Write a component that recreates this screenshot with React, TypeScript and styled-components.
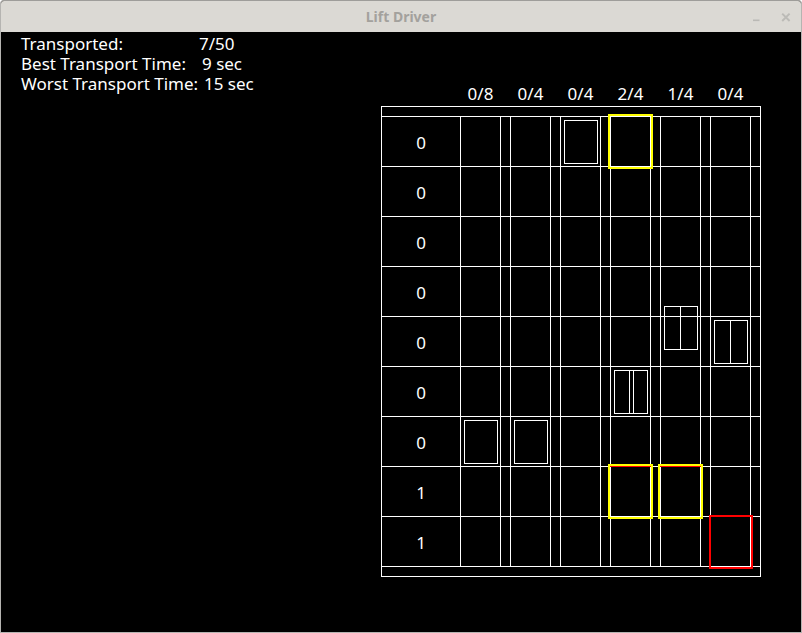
import React from 'react';
import styled, { createGlobalStyle } from 'styled-components';

const GlobalStyle = createGlobalStyle`
  html, body {
    margin: 0;
    padding: 0;
    background: #ffffff;
  }

  body {
    font-family: "Noto Sans", "DejaVu Sans", sans-serif;
  }
`;

const FLOOR_HEIGHT = 50;

type Doors = 'open' | 'ajar' | 'closed';
type Tone = 'call' | 'target';

interface Mark {
  row: number;
  tone: Tone;
  // a call that is also a target shows a thin red line inside the yellow frame
  alsoTarget?: boolean;
}

interface ShaftData {
  load: string;
  car: { at: number; doors: Doors };
  marks: Mark[];
}

const floorCounts = ['0', '0', '0', '0', '0', '0', '0', '1', '1'];

const shafts: ShaftData[] = [
  { load: '0/8', car: { at: 6, doors: 'open' }, marks: [] },
  { load: '0/4', car: { at: 6, doors: 'open' }, marks: [] },
  { load: '0/4', car: { at: 0, doors: 'open' }, marks: [] },
  {
    load: '2/4',
    car: { at: 5, doors: 'ajar' },
    marks: [
      { row: 0, tone: 'call' },
      { row: 7, tone: 'call', alsoTarget: true },
    ],
  },
  {
    load: '1/4',
    car: { at: 3.72, doors: 'closed' },
    marks: [{ row: 7, tone: 'call', alsoTarget: true }],
  },
  { load: '0/4', car: { at: 4, doors: 'closed' }, marks: [{ row: 8, tone: 'target' }] },
];

const stats = [
  { label: 'Transported:', value: '7/50', indent: 0 },
  { label: 'Best Transport Time:', value: '9 sec', indent: 3 },
  { label: 'Worst Transport Time:', value: '15 sec', indent: 5 },
];

const Window = styled.div`
  width: 802px;
  height: 633px;
  box-sizing: border-box;
  display: flex;
  flex-direction: column;
  border: 1px solid #b5b4b1;
  border-top-color: #9e9d9a;
  border-radius: 4px 4px 0 0;
  overflow: hidden;
  background: #000000;
`;

const TitleBar = styled.header`
  flex: none;
  height: 31px;
  display: grid;
  grid-template-columns: 1fr auto 1fr;
  align-items: center;
  background: #dbd9d4;
`;

const Title = styled.h1`
  grid-column: 2;
  margin: 0;
  font-size: 14px;
  font-weight: 700;
  line-height: 1;
  color: #a3a19d;
`;

const WindowButtons = styled.div`
  grid-column: 3;
  justify-self: end;
  display: flex;
  gap: 6px;
  height: 100%;
  padding-right: 3px;
`;

const WindowButton = styled.button`
  width: 24px;
  height: 31px;
  padding: 0;
  border: 0;
  background: none;

  svg {
    display: block;
  }
`;

const Canvas = styled.main`
  flex: 1;
  display: flex;
  justify-content: space-between;
  align-items: flex-start;
  padding: 2px 40px 0 20px;
  background: #000000;
  color: #ffffff;
  font-family: "Noto Sans", "DejaVu Sans", sans-serif;
  font-size: 17px;
  line-height: 20px;
`;

const Stats = styled.dl`
  margin: 0;
  display: grid;
  grid-template-columns: 178px auto;
`;

const StatLabel = styled.dt`
  margin: 0;
  white-space: nowrap;
`;

const StatValue = styled.dd<{ $indent: number }>`
  margin: 0;
  padding-left: ${p => p.$indent}px;
  white-space: nowrap;
`;

const Panel = styled.section`
  width: 380px;
  margin-top: 50px;
`;

const LoadRow = styled.div`
  display: flex;
  height: 20px;
  margin-bottom: 2px;
  padding-left: 79px;
`;

const LoadCell = styled.div`
  width: 50px;
`;

const LoadText = styled.span`
  display: block;
  width: 41px;
  text-align: center;
`;

const Building = styled.div`
  box-sizing: border-box;
  width: 380px;
  padding: 9px 0;
  border: 1px solid #ffffff;
`;

const FloorGrid = styled.div`
  display: flex;
  border-bottom: 1px solid #ffffff;
`;

const LabelColumn = styled.div`
  width: 78px;
`;

const FloorLabel = styled.div`
  box-sizing: border-box;
  height: ${FLOOR_HEIGHT}px;
  padding-top: 2px;
  display: flex;
  align-items: center;
  justify-content: center;
  border-top: 1px solid #ffffff;
`;

const Shaft = styled.div`
  position: relative;
  box-sizing: border-box;
  width: 50px;
  border-left: 1px solid #ffffff;
`;

const ShaftCell = styled.div`
  box-sizing: border-box;
  height: ${FLOOR_HEIGHT}px;
  border-top: 1px solid #ffffff;
`;

const Well = styled.div`
  box-sizing: border-box;
  width: 40px;
  height: 100%;
  border-right: 1px solid #ffffff;
`;

const Highlight = styled.div<{ $tone: Tone; $alsoTarget?: boolean }>`
  position: absolute;
  box-sizing: border-box;
  left: ${p => (p.$tone === 'call' ? -3 : -2)}px;
  width: ${p => (p.$tone === 'call' ? 45 : 44)}px;
  height: ${p => (p.$tone === 'call' ? 55 : 54)}px;
  border: 2px solid ${p => (p.$tone === 'call' ? '#ffff00' : '#ff0000')};
  box-shadow: ${p => (p.$alsoTarget ? 'inset 0 1px 0 #ff0000' : 'none')};
  z-index: ${p => (p.$tone === 'call' ? 2 : 1)};
`;

const Car = styled.div`
  position: absolute;
  left: 3px;
  box-sizing: border-box;
  width: 34px;
  height: 44px;
  display: flex;
  justify-content: space-between;
  border: 1px solid #ffffff;
  z-index: 3;
`;

const LeftDoor = styled.div<{ $width: number }>`
  box-sizing: border-box;
  width: ${p => p.$width}px;
  border-right: 1px solid #ffffff;
`;

const RightDoor = styled.div<{ $width: number }>`
  box-sizing: border-box;
  width: ${p => p.$width}px;
  border-left: 1px solid #ffffff;
`;

const CarDoors: React.FC<{ doors: Doors }> = ({ doors }) => {
  if (doors === 'closed') return <LeftDoor $width={16} />;
  if (doors === 'ajar') {
    return (
      <>
        <LeftDoor $width={15} />
        <RightDoor $width={14} />
      </>
    );
  }
  return null;
};

const App: React.FC = () => {
  return (
    <>
      <GlobalStyle />
      <Window>
        <TitleBar>
          <Title>Lift Driver</Title>
          <WindowButtons>
            <WindowButton aria-label="Minimize">
              <svg width="24" height="31" viewBox="0 0 24 31">
                <rect x="9" y="18.5" width="6.5" height="1.6" fill="#bab9b5" />
              </svg>
            </WindowButton>
            <WindowButton aria-label="Close">
              <svg width="24" height="31" viewBox="0 0 24 31">
                <path
                  d="M8.2 12.6 L15.6 20 M15.6 12.6 L8.2 20"
                  stroke="#bcbbb7"
                  strokeWidth="2"
                  fill="none"
                />
              </svg>
            </WindowButton>
          </WindowButtons>
        </TitleBar>

        <Canvas>
          <Stats>
            {stats.map(s => (
              <React.Fragment key={s.label}>
                <StatLabel>{s.label}</StatLabel>
                <StatValue $indent={s.indent}>{s.value}</StatValue>
              </React.Fragment>
            ))}
          </Stats>

          <Panel>
            <LoadRow>
              {shafts.map((s, i) => (
                <LoadCell key={i}>
                  <LoadText>{s.load}</LoadText>
                </LoadCell>
              ))}
            </LoadRow>

            <Building>
              <FloorGrid>
                <LabelColumn>
                  {floorCounts.map((count, i) => (
                    <FloorLabel key={i}>{count}</FloorLabel>
                  ))}
                </LabelColumn>

                {shafts.map((s, i) => (
                  <Shaft key={i}>
                    {floorCounts.map((_, row) => (
                      <ShaftCell key={row}>
                        <Well />
                      </ShaftCell>
                    ))}
                    {s.marks.map((m, j) => (
                      <Highlight
                        key={j}
                        $tone={m.tone}
                        $alsoTarget={m.alsoTarget}
                        style={{ top: m.row * FLOOR_HEIGHT - (m.tone === 'call' ? 2 : 1) }}
                      />
                    ))}
                    <Car style={{ top: 4 + s.car.at * FLOOR_HEIGHT }}>
                      <CarDoors doors={s.car.doors} />
                    </Car>
                  </Shaft>
                ))}
              </FloorGrid>
            </Building>
          </Panel>
        </Canvas>
      </Window>
    </>
  );
};

export default App;
